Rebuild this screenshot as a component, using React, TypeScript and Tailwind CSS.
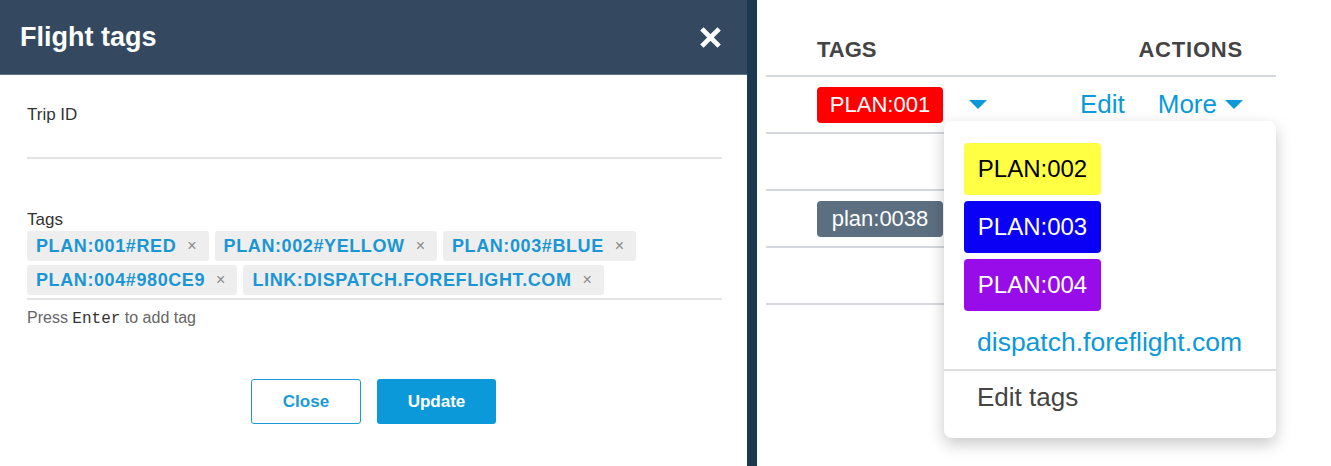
const tags = ["PLAN:001#RED", "PLAN:002#YELLOW", "PLAN:003#BLUE", "PLAN:004#980CE9", "LINK:DISPATCH.FOREFLIGHT.COM"]

function Caret({ className }: { className: string }) {
    return (
        <svg viewBox="0 0 20 10" className={className}>
            <polygon points="0,0 20,0 10,10" fill="#0b99d9" />
        </svg>
    )
}

function TagChip({ label }: { label: string }) {
    return (
        <div className="flex h-[30px] items-center rounded-[3px] bg-[#eeeeee] pl-[9px] pr-[12px]">
            <span className="text-[18px] font-bold tracking-[0.6px] text-[#1a96d4]">{label}</span>
            <span className="ml-[11px] text-[16px] leading-none text-[#8a8a8a]">×</span>
        </div>
    )
}

function FlightTagsDialog() {
    return (
        <div className="flex w-[747px] flex-col bg-white">
            <div className="flex h-[75px] items-center justify-between border-b border-[#5d738a] bg-[#34495f] pl-[20px] pr-[25px]">
                <h1 className="text-[27px] font-bold text-white">Flight tags</h1>
                <svg viewBox="0 0 24 24" className="h-[23px] w-[23px]">
                    <path d="M3 3 L21 21 M21 3 L3 21" stroke="white" strokeWidth="5" />
                </svg>
            </div>

            <div className="flex flex-col pl-[27px] pr-[25px] pt-[30px]">
                <label className="text-[17px] leading-[20px] text-[#333]">Trip ID</label>
                <div className="h-[34px] border-b-2 border-[#e3e3e3]" />

                <label className="mt-[51px] text-[17px] leading-[20px] text-[#333]">Tags</label>
                <div className="mt-[1px] flex flex-wrap gap-x-[6px] gap-y-[4px] border-b-2 border-[#e3e3e3] pb-[3px]">
                    {tags.map(t => (
                        <TagChip key={t} label={t} />
                    ))}
                </div>
                <p className="mt-[8px] text-[16px] leading-[20px] text-[#666]">
                    Press <span className="font-['Liberation_Mono',monospace] text-[16px] text-[#333]">Enter</span> to add tag
                </p>

                <div className="mt-[50px] flex justify-center gap-[16px] pr-[2px]">
                    <button className="h-[45px] w-[110px] rounded-[3px] border-[1.5px] border-[#1a9ad6] bg-white text-[17px] font-bold text-[#1a9ad6]">
                        Close
                    </button>
                    <button className="h-[45px] w-[119px] rounded-[3px] bg-[#0b99d9] text-[17px] font-bold text-white">
                        Update
                    </button>
                </div>
            </div>
        </div>
    )
}

function DropdownBadge({ label, className }: { label: string; className: string }) {
    return (
        <div className={`flex h-[52px] w-[137px] items-center justify-center rounded-[4px] text-[24px] ${className}`}>
            {label}
        </div>
    )
}

function FlightsTable() {
    return (
        <div className="relative flex-1 bg-white pl-[9px] pr-[55px]">
            <div className="flex h-[77px] items-end justify-between border-b-2 border-[#d4d8dc] pb-[13px] pl-[51px] pr-[33px]">
                <span className="text-[22px] font-bold leading-[25px] text-[#444]">TAGS</span>
                <span className="text-[22px] font-bold leading-[25px] tracking-[0.8px] text-[#444]">ACTIONS</span>
            </div>

            <div className="flex h-[57px] items-center border-b-2 border-[#d4d8dc] pl-[51px] pr-[33px]">
                <span className="flex h-[36px] w-[126px] items-center justify-center rounded-[4px] bg-[#ff0000] text-[22px] text-white">
                    PLAN:001
                </span>
                <Caret className="ml-[25px] h-[9px] w-[20px]" />
                <span className="ml-auto text-[26px] text-[#0b99d9]">Edit</span>
                <span className="ml-[33px] text-[26px] text-[#0b99d9]">More</span>
                <Caret className="ml-[8px] h-[9px] w-[18px]" />
            </div>
            <div className="h-[57px] border-b-2 border-[#d4d8dc]" />
            <div className="flex h-[57px] items-center border-b-2 border-[#d4d8dc] pl-[51px]">
                <span className="flex h-[36px] w-[126px] items-center justify-center rounded-[4px] bg-[#5c6f80] text-[22px] text-white">
                    plan:0038
                </span>
            </div>
            <div className="h-[57px] border-b-2 border-[#d4d8dc]" />

            <div className="absolute left-[187px] top-[121px] flex w-[332px] flex-col rounded-[8px] bg-white pb-[15px] pt-[22px] shadow-[0_6px_16px_rgba(0,0,0,0.22)]">
                <div className="flex flex-col gap-[6px] pl-[20px]">
                    <DropdownBadge label="PLAN:002" className="bg-[#ffff44] text-black" />
                    <DropdownBadge label="PLAN:003" className="bg-[#0a00f5] text-white" />
                    <DropdownBadge label="PLAN:004" className="bg-[#980ce9] text-white" />
                </div>
                <div className="mt-[6px] flex h-[52px] items-center pl-[33px] text-[26.5px] text-[#0b99d9]">
                    dispatch.foreflight.com
                </div>
                <div className="flex h-[54px] items-center border-t-2 border-[#dedede] pl-[33px] text-[26px] text-[#444]">
                    Edit tags
                </div>
            </div>
        </div>
    )
}

export default function App() {
    return (
        <div className="flex h-[466px] w-[1331px] overflow-hidden font-['Liberation_Sans',Arial,sans-serif]">
            <FlightTagsDialog />
            <div className="w-[10px] bg-[#1b3a52]" />
            <FlightsTable />
        </div>
    )
}
